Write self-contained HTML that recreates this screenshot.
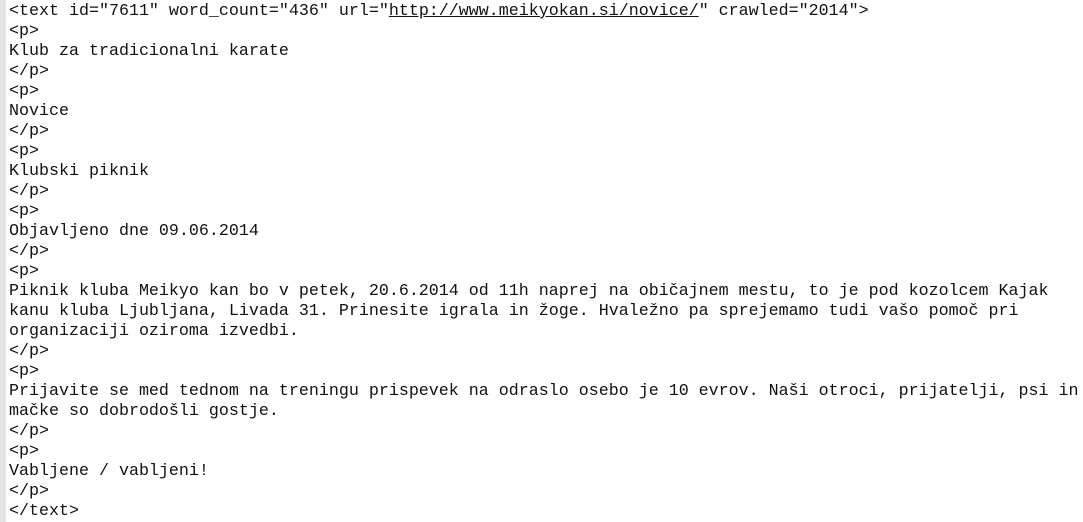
<!DOCTYPE html>
<html><head><meta charset="utf-8"><style>
html,body{margin:0;padding:0;background:#fff;width:1083px;height:522px;overflow:hidden}
.strip{position:absolute;left:0;top:0;width:6px;height:522px;background:#e3e3e3}
pre{position:absolute;left:9px;top:2px;margin:0;font-family:"Liberation Mono",monospace;font-size:16.67px;line-height:20px;color:#111;white-space:pre}
a{color:#111;text-decoration:underline}
</style></head><body><div class="strip"></div><pre>&lt;text id="7611" word_count="436" url="<a>http://www.meikyokan.si/novice/</a>" crawled="2014"&gt;
&lt;p&gt;
Klub za tradicionalni karate
&lt;/p&gt;
&lt;p&gt;
Novice
&lt;/p&gt;
&lt;p&gt;
Klubski piknik
&lt;/p&gt;
&lt;p&gt;
Objavljeno dne 09.06.2014
&lt;/p&gt;
&lt;p&gt;
Piknik kluba Meikyo kan bo v petek, 20.6.2014 od 11h naprej na običajnem mestu, to je pod kozolcem Kajak
kanu kluba Ljubljana, Livada 31. Prinesite igrala in žoge. Hvaležno pa sprejemamo tudi vašo pomoč pri
organizaciji oziroma izvedbi.
&lt;/p&gt;
&lt;p&gt;
Prijavite se med tednom na treningu prispevek na odraslo osebo je 10 evrov. Naši otroci, prijatelji, psi in
mačke so dobrodošli gostje.
&lt;/p&gt;
&lt;p&gt;
Vabljene / vabljeni!
&lt;/p&gt;
&lt;/text&gt;</pre></body></html>
